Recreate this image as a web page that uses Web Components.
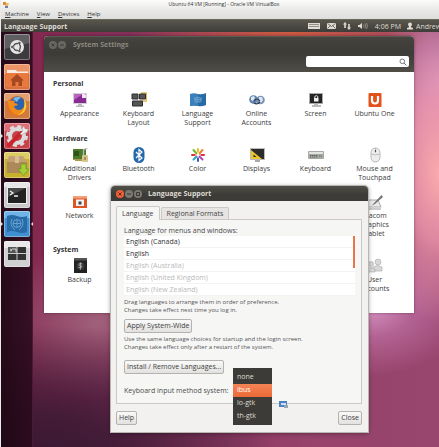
<!DOCTYPE html>
<html lang="en">
<head>
<meta charset="utf-8">
<title>Ubuntu 64 VM [Running] - Oracle VM VirtualBox</title>
<style>
html, body { height: 100%; margin: 0; }
body { font: 7px/9px "Open Sans", "Noto Sans", sans-serif; color: #4c4c4c; overflow: hidden; }
</style>
</head>
<body>
<vm-window heading="Ubuntu 64 VM [Running] - Oracle VM VirtualBox">
  <top-panel slot="panel" app="Language Support" time="4:06 PM" user="Andrew"></top-panel>
  <app-launcher slot="launcher"></app-launcher>
  <settings-window></settings-window>
  <language-dialog></language-dialog>
</vm-window>

<script>
const ICONS = {
  dash: '<rect width="26" height="26" fill="#3c3c3e"/><path d="M0 0h26v9Q13 12 0 15z" fill="#77777a" opacity=".6"/><circle cx="13" cy="13" r="7" fill="#e6e6e6"/><circle cx="13" cy="13" r="3.4" fill="none" stroke="#555" stroke-width="1.5"/><path d="M13 13L7 13M13 13l3.2-5.4M13 13l3.2 5.4" stroke="#e6e6e6" stroke-width="1"/><circle cx="8.3" cy="13" r="1.2" fill="#555"/><circle cx="15.4" cy="8.9" r="1.2" fill="#555"/><circle cx="15.4" cy="17.1" r="1.2" fill="#555"/>',
  home: '<rect width="26" height="26" fill="#d9703f"/><path d="M0 0h26v10H0z" fill="#f2a47a" opacity=".7"/><path d="M3 6h9l1 1.500h11v2H3z" fill="#f8ece4"/><path d="M2 9h22v14H2z" fill="#e8793f"/><path d="M13 10l7 6.500h-2V22h-3.500v-4h-3v4H8v-5.500H6z" fill="#a8481f"/>',
  firefox: '<rect width="26" height="26" fill="#cf7a3e"/><path d="M0 0h26v8H0z" fill="#eab088" opacity=".7"/><circle cx="13" cy="13" r="10" fill="#e8701a"/><circle cx="13.500" cy="11" r="7.500" fill="#2b62ae"/><path d="M9 6q4-4 8-1-3 1-4 4z" fill="#7ab8e8"/><path d="M4 6q1 2 3 2 2-1 4 0l-1 2q3 0 4 2-2 1-4 1 1 4 5 4 5 0 6-7 3 5-1 9-5 5-11 1-6-5-5-14z" fill="#f08a1e"/><path d="M20 6q3 4 2 9-2 7-9 7 6-2 7-7 1-4 0-9z" fill="#f9cf3c"/>',
  settings: '<rect width="26" height="26" fill="#c8404a"/><path d="M0 0h26v8H0z" fill="#e88088" opacity=".7"/><circle cx="13" cy="13" r="7" fill="none" stroke="#dcdcdc" stroke-width="4"/><circle cx="13" cy="13" r="9.500" fill="none" stroke="#dcdcdc" stroke-width="3" stroke-dasharray="4 3.460"/><path d="M5 22L17 10" stroke="#c9252d" stroke-width="4" stroke-linecap="round"/><path d="M16 11l3-3q-2-3 1-5l1 3 3 0q0 4-4 4l-2 2z" fill="#eee" stroke="#999" stroke-width=".5"/>',
  software: '<rect width="26" height="26" fill="#c7b02c"/><path d="M0 0h26v7H0z" fill="#e6d878" opacity=".7"/><path d="M5 4h14l4 6v11H3V10z" fill="#c3a173"/><path d="M3 10h20v11H3z" fill="#ad8858"/><path d="M11 4h4v7h-4z" fill="#d9bf90"/><path d="M17 12h5v5h3l-5.500 6.500L14 17h3z" fill="#a3d037" stroke="#6f9a1c" stroke-width=".7"/>',
  terminal: '<rect width="26" height="26" fill="#c9c9c9"/><path d="M0 0h26v5H0z" fill="#e6e6e6"/><rect x="3" y="5" width="20" height="17" fill="#eee"/><rect x="4" y="6" width="18" height="15" fill="#222"/><path d="M4 6h18L4 15z" fill="#484848"/><path d="M6 9l3 2-3 2M10 14h4" fill="none" stroke="#eee" stroke-width="1.300"/>',
  language: '<rect width="26" height="26" fill="#3f8fd0"/><path d="M0 0h26v7H0z" fill="#7cbcec" opacity=".8"/><path d="M3 5q5-2 10 0t10 0v16q-5 2-10 0t-10 0z" fill="#286ba6"/><g fill="none" stroke="#6aa6d6" stroke-width=".9"><circle cx="13" cy="12.500" r="4"/><path d="M9 12.500h8M13 8.500v8M8 8q-3 6 3 11M18 8q3 6-3 11"/></g>',
  workspaces: '<rect width="26" height="26" fill="#d0d0d0"/><path d="M0 0h26v7H0z" fill="#e8e8e8"/><rect x="4" y="6" width="18" height="13" fill="#333"/><path d="M4 6h9v6H4z" fill="#555"/><path d="M13 6v13M4 12.500h18" stroke="#ccc"/><path d="M6 8l2 1-2 1M8 8h4v3" fill="none" stroke="#eee" stroke-width=".8"/>',
  appearance: '<path d="M1 1h14v11H1z" fill="#d2d2d2"/><path d="M2 2h12v9H2z" fill="#8a2a94"/><path d="M2 2h9L2 8z" fill="#b964c0"/><path d="M10 2h3l1 1v3h-4z" fill="#f5e4f5"/><path d="M6 12h4v1.500h2V15H4v-1.500h2z" fill="#bbb"/>',
  layout: '<path d="M10 1h5.500v8H11v4H9" fill="none" stroke="#e8b64a" stroke-width="1.300"/><path d="M1 2h6v5H1zM8.500 2h6v5h-6zM1.500 9h10v5h-10z" fill="#555" stroke="#2e2e2e"/>',
  flag: '<path d="M0 2q4-1 8 0t8-1v12q-4 2-8 1t-8 0z" fill="#286aa6"/><path d="M0 2q4-1 8 0v12q-4-1-8 0z" fill="#3b80bb"/><g fill="none" stroke="#79afd8" stroke-width=".7"><circle cx="8" cy="7.500" r="2.500"/><path d="M8 5v5M5.500 7.500h5M5 5q-1.500 4 1.500 6M11 5q1.500 4-1.500 6"/></g>',
  online: '<circle cx="4.500" cy="7.500" r="4.300" fill="#5f83ad"/><circle cx="11.500" cy="8" r="4.300" fill="#7893b4"/><path d="M2 5l3-1 1 2-2 3-2-1zM10 5l3 0 1 3-2 3-2-3z" fill="#dfe8f1"/><path d="M5 9q3-4 6 0M5 11q3 2 6-1" fill="none" stroke="#333f50" stroke-width="1.200"/>',
  screen: '<path d="M1 1h14v11H1z" fill="#aaa"/><path d="M2 2h12v9H2z" fill="#252525"/><rect x="6" y="6" width="4.500" height="3.500" fill="#f1f1f1"/><path d="M6.800 6V4.500q1.500-1.800 3 0V6" fill="none" stroke="#eee"/><path d="M6 12h4v1h3v2H4v-2h2z" fill="#bbb"/>',
  one: '<rect x="1.500" y="1" width="13" height="14" rx="1" fill="#e4521b"/><path d="M5 4v4.500q0 3 3 3t3-3V4" fill="none" stroke="#fff" stroke-width="2.200"/>',
  drivers: '<path d="M1 2h13v10H1z" fill="#4b7a2b"/><path d="M2 4h5v5H2z" fill="#2d5318"/><path d="M1 12h9v2H3v-1H1z" fill="#a89a50"/><path d="M11.500 8V3q2-2 4-1" fill="none" stroke="#b9b9b9" stroke-width="1.300"/><rect x="10" y="8" width="6" height="7" rx="1" fill="#d6c48c"/><path d="M13 10v3" stroke="#775f2a"/>',
  bluetooth: '<rect x="2.500" y="0" width="11" height="16" rx="5.500" fill="#2568aa"/><path d="M5 5l6 6-3 2.500v-11L11 5l-6 6" fill="none" stroke="#fff" stroke-width="1.200"/>',
  color: '<g stroke-width="2" stroke-linecap="round"><path d="M8 6V2" stroke="#f0c020"/><path d="M9.500 6.500L12.500 3" stroke="#f08030"/><path d="M10 8h4" stroke="#e03040"/><path d="M9.500 9.500l3 3" stroke="#b04ab0"/><path d="M8 10v4" stroke="#4058c0"/><path d="M6.500 9.500l-3 3" stroke="#30a0c0"/><path d="M6 8H2" stroke="#d33"/><path d="M6.500 6.500L3.500 3" stroke="#6cba30"/></g><path d="M8 5v6M5 8h6" stroke="#fff" stroke-width="1"/>',
  displays: '<path d="M1 1h15v12H1z" fill="#bbb"/><path d="M2 2h13v10H2z" fill="#2b2b2b"/><path d="M2 3l11 9H2z" fill="#e9c72c"/><path d="M4.500 7.500L7.500 10h-3z" fill="#2b2b2b"/><path d="M6 13h5v2H6z" fill="#aaa"/>',
  keyboard: '<rect x="0" y="4" width="16" height="8" rx="1" fill="#a5aaa3"/><path d="M1 5h14v2H1z" fill="#e2e4e0"/><path d="M2 8.500h8M2 10h8M11 9h3" stroke="#5e635c" stroke-dasharray="1.400 .6"/>',
  mouse: '<rect x="4" y="1" width="9" height="14" rx="4.500" fill="#ececec" stroke="#aaa" stroke-width=".8"/><path d="M8.500 1v5M4.500 7q4 2 8 0" fill="none" stroke="#aaa" stroke-width=".7"/><path d="M8.500 3v2" stroke="#555" stroke-width="1.200"/>',
  network: '<path d="M1 2h14v12H1z" fill="#df5526"/><path d="M1 2h14v2.500H1z" fill="#f3a07f"/><path d="M4 5.500h8V12H4z" fill="#f4f4f4"/><path d="M6.500 7.500h3v3h-3z" fill="#444"/>',
  tablet: '<path d="M2 6h9l3 7H0z" fill="#eaeaea" stroke="#aaa"/><path d="M14.500 1L7 9l-2 2.500L8 10l8-7z" fill="#777"/><path d="M2 15h12" stroke="#999"/>',
  backup: '<rect x="2" y="0" width="13" height="15" fill="#222"/><path d="M2 0h13v2.500H2z" fill="#555"/><circle cx="8.500" cy="8" r="4" fill="#3a3a3a"/><path d="M10 6q-3-1.500-3 .5t2.500 1.500q1 2-3 1.500M8.500 4.500v7" fill="none" stroke="#bbb" stroke-width=".8"/>',
  users: '<g fill="#d8d8d8" stroke="#aaa" stroke-width=".6"><circle cx="11" cy="4" r="3"/><path d="M6 13V9q5-3 9 0v4z"/><circle cx="4" cy="6" r="2.500"/><path d="M0 14v-3q4-3 8 0v3z"/></g>'
};
const art = (name, box) => `<svg viewBox="0 0 ${box} ${box}" aria-hidden="true">${ICONS[name]}</svg>`;
const RESET = `:host,*{box-sizing:border-box}button{font:inherit;color:inherit;border:0;background:none;padding:0;margin:0}svg{display:block}p,h1,h2,ul{margin:0;padding:0;font:inherit}`;

class Base extends HTMLElement {
  connectedCallback() {
    if (this.shadowRoot) return;
    this.attachShadow({ mode: 'open' }).innerHTML = `<style>${RESET}${this.css()}</style>${this.html()}`;
  }
}

customElements.define('vm-window', class extends Base {
  css() { return `
    :host{display:flex;flex-direction:column;height:100vh;background:#ecebe9;padding-left:1px}
    header{background:linear-gradient(#fbfbfa,#e9e9e7 10px,#dededc);color:#333}
    .title{display:flex;align-items:center;height:9px;padding:0 1px}
    .title svg{width:8px;height:8px}
    h1{flex:1;text-align:center;font:5px/9px "Open Sans",sans-serif}
    nav{display:flex;gap:8px;height:10px;padding-left:4px;font-size:6px;line-height:10px}
    nav u{text-underline-offset:1px}
    .screen{position:relative;flex:1;min-height:0;display:flex;background:
      radial-gradient(ellipse 240px 140px at 8% 104%,#371832 0,#3a1a34e0 35%,#4a223c00 100%),
      radial-gradient(ellipse 70px 150px at 100% 34%,#fbaaae 0,#f59db2c0 45%,#e58cb400 100%),
      radial-gradient(ellipse 60px 100px at 100% 12%,#c88ab8 0,#c98ab900 100%),
      radial-gradient(ellipse 100px 70px at 84% 66%,#d794c4 0,#c577ac99 45%,#b8609c00 100%),
      radial-gradient(ellipse 160px 30px at 66% 0,#cf5a40 0,#c0503c00 100%),
      radial-gradient(ellipse 110px 80px at 22% 70%,#a0607a 0,#8a486400 100%),
      linear-gradient(90deg,#84284f 8%,#84305a 30%,#96426a 70%,#98466e)}
    .work{position:relative;flex:1;min-width:0}`; }
  html() {
    const [m, v, d, h] = ['Machine', 'View', 'Devices', 'Help'].map(t => `<button><u>${t[0]}</u>${t.slice(1)}</button>`);
    return `<header><div class="title"><svg viewBox="0 0 8 8" aria-hidden="true"><path d="M1 1h3v3H1z" fill="#d98a30"/><path d="M4 2h3l-1 3H3z" fill="#f0b860"/><path d="M3 5h3v2H3z" fill="#6e7fae"/></svg><h1>${this.getAttribute('heading')}</h1></div>
      <nav>${m}${v}${d}${h}</nav></header>
      <slot name="panel"></slot><div class="screen"><slot name="launcher"></slot><div class="work"><slot></slot></div></div>`; }
});

customElements.define('top-panel', class extends Base {
  css() { return `
    :host{display:flex;align-items:center;height:13px;padding-left:3px;background:linear-gradient(#58564d,#3e3d38);color:#dfdbd2;white-space:nowrap;border-top:1px solid #6a685e}
    b{flex:1}
    button{display:flex;align-items:center;margin-left:7px}
    svg{fill:#dfdbd2;height:8px}
    .user{gap:3px;margin-left:6px}.user span{width:23px;overflow:hidden;text-align:left}`; }
  html() { return `<b>${this.getAttribute('app')}</b>
    <button aria-label="Keyboard"><svg width="12" viewBox="0 0 12 8"><path d="M0 1h12v6H0z"/><path d="M1.500 2.500h9M1.500 4.500h9" stroke="#45443e" stroke-dasharray="1 1"/></svg></button>
    <button aria-label="Mail"><svg width="9" viewBox="0 0 9 8"><path d="M0 1h9v6H0z"/><path d="M.5 1.500l4 3 4-3M.5 6.500l3-3M8.500 6.500l-3-3" fill="none" stroke="#45443e" stroke-width=".7"/></svg></button>
    <button aria-label="Network"><svg width="8" viewBox="0 0 8 8"><path d="M2 0l2 2.500H2.800V6H1.200V2.500H0zM6 8L4 5.500h1.200V2h1.600v3.500H8z"/></svg></button>
    <button aria-label="Sound"><svg width="10" viewBox="0 0 10 8"><path d="M0 3h1.500L4 1v6L1.500 5H0z"/><path d="M5.500 2.500q1 1.500 0 3M7 1.500q1.800 2.500 0 5M8.500 1q2 3 0 6" fill="none" stroke="#9a978f" stroke-width=".8"/></svg></button>
    <button>${this.getAttribute('time')}</button>
    <button class="user"><svg width="6" viewBox="0 0 6 8"><circle cx="3" cy="2.500" r="2"/><path d="M2 4h2v1.200l2 .8v1.500H0V6l2-.8z"/></svg><span>${this.getAttribute('user')}</span></button>`; }
});

customElements.define('app-launcher', class extends Base {
  css() { return `
    :host{display:block;width:32px;background:linear-gradient(90deg,#1d0713e8,#2a0a1ce0);border-right:1px solid #4a1c34}
    nav{display:flex;flex-direction:column;justify-content:space-between;align-items:center;height:235px;padding-top:2px}
    button{position:relative;width:26px;height:26px}
    svg{width:26px;height:26px;border-radius:2px}
    button::after{content:"";position:absolute;inset:0;border:1px solid #ffffff55;border-radius:2px}
    i{position:absolute;top:11px;border:2px solid transparent}
    .l{left:-3px;border-left-color:#ddd}.r{right:-3px;border-right-color:#ddd}`; }
  html() {
    const items = [['dash','Dash home'],['home','Home Folder'],['firefox','Firefox'],['settings','System Settings','<i class="l"></i>'],['software','Software Centre'],['terminal','Terminal'],['language','Language Support','<i class="l"></i><i class="r"></i>'],['workspaces','Workspaces']];
    return `<nav>${items.map(([k, t, x = '']) => `<button aria-label="${t}">${art(k, 26)}${x}</button>`).join('')}</nav>`; }
});

customElements.define('window-button', class extends Base {
  css() { return `
    :host{display:block}
    button{display:block;width:8px;height:8px;border-radius:4px;background:#7b7972}
    svg{width:8px;height:8px}
    path{fill:none;stroke:#3a3934}
    :host([hot]) button{background:#ee6038}
    :host([hot]) path{stroke:#6b2412}`; }
  html() {
    const k = this.getAttribute('kind');
    const d = { Close: 'M2.500 2.500l3 3M5.500 2.500l-3 3', Minimize: 'M2 4h4', Maximize: 'M2.500 2.500h3v3h-3z' }[k];
    return `<button aria-label="${k}"><svg viewBox="0 0 8 8"><path d="${d}"/></svg></button>`; }
});

customElements.define('setting-tile', class extends Base {
  css() { return `
    :host{display:block;text-align:center;color:#3c3c3c}
    button{display:block;width:100%;line-height:9px}
    svg{width:16px;height:16px;margin:0 auto 1px}`; }
  html() { return `<button>${art(this.getAttribute('icon'), 16)}<slot></slot></button>`; }
});

customElements.define('setting-group', class extends Base {
  css() { return `
    :host{display:block}
    h2{font-weight:bold;line-height:10px;padding-left:3px;margin-bottom:3px;color:#333}
    div{display:grid;grid-template-columns:repeat(6,1fr);row-gap:12px}`; }
  html() { return `<h2>${this.getAttribute('heading')}</h2><div><slot></slot></div>`; }
});

customElements.define('settings-window', class extends Base {
  css() { return `
    :host{position:absolute;left:11px;right:25px;top:4px;display:flex;flex-direction:column;border-radius:4px 4px 0 0;overflow:hidden;background:#fff;box-shadow:0 0 3px #0006;min-height:277px}
    header{background:linear-gradient(#45443f,#3c3b37 45%,#4f4d46);border-top:1px solid #5b5a54}
    .bar{display:flex;align-items:center;gap:1px;height:15px;padding-left:5px;color:#8b887f;font-weight:bold}
    .bar span{padding-left:6px}
    window-button{opacity:.7}
    form{display:flex;justify-content:flex-end;margin:0;padding:4px 5px 5px}
    label{display:flex;align-items:center;width:103px;height:11px;background:#fff;border-radius:2px;padding-right:2px}
    input{flex:1;min-width:0;border:0;background:none;font:inherit;padding:0 2px;outline:0;height:9px}
    label svg{width:8px;height:8px;fill:none;stroke:#777}
    main{display:flex;flex-direction:column;gap:7px;padding:7px 10px 0 6px}
    .last{grid-column:6}.first{grid-column:1}`; }
  html() {
    const t = (i, s, c = '') => `<setting-tile icon="${i}" class="${c}">${s}</setting-tile>`;
    return `<header><div class="bar"><window-button kind="Close"></window-button><window-button kind="Minimize"></window-button><span>System Settings</span></div>
    <form><label><input type="search" aria-label="Search settings"><svg viewBox="0 0 8 8"><circle cx="3.300" cy="3.300" r="2.300"/><path d="M5 5l2.500 2.500"/></svg></label></form></header>
    <main>
    <setting-group heading="Personal">${t('appearance','Appearance')}${t('layout','Keyboard<br>Layout')}${t('flag','Language<br>Support')}${t('online','Online<br>Accounts')}${t('screen','Screen')}${t('one','Ubuntu One')}</setting-group>
    <setting-group heading="Hardware">${t('drivers','Additional<br>Drivers')}${t('bluetooth','Bluetooth')}${t('color','Color')}${t('displays','Displays')}${t('keyboard','Keyboard')}${t('mouse','Mouse and<br>Touchpad')}${t('network','Network','first')}${t('tablet','Wacom<br>Graphics<br>Tablet','last')}</setting-group>
    <setting-group heading="System">${t('backup','Backup')}${t('users','User<br>Accounts','last')}</setting-group>
    </main>`; }
});

customElements.define('push-button', class extends Base {
  css() { return `
    :host{display:inline-block}
    button{height:14px;padding:0 2px;line-height:12px;color:#3f3f3f;border:1px solid #b5b3af;border-radius:2px;background:linear-gradient(#fafafa,#e2e1df);white-space:nowrap}`; }
  html() { return `<button><slot></slot></button>`; }
});

customElements.define('language-dialog', class extends Base {
  css() { return `
    :host{position:absolute;left:78px;right:71px;top:154px;border-radius:4px 4px 0 0;background:#f2f1f0;box-shadow:0 0 0 1px #b9b5b0,0 1px 5px #0007}
    header{display:flex;align-items:center;gap:1px;height:15px;padding-left:5px;border-radius:4px 4px 0 0;background:linear-gradient(#504f49,#3c3b37 60%);color:#dfdbd2;font-weight:bold}
    header span{padding-left:5px}
    .body{padding:5px 6px 7px 5px}
    .tabs{display:flex;align-items:flex-end;gap:1px}
    .tabs button{height:12px;padding:0 5px;line-height:11px;border:1px solid #cbc9c5;border-bottom:0;border-radius:2px 2px 0 0;background:#e6e5e3;color:#444}
    .tabs button[aria-selected=true]{height:14px;margin-bottom:-1px;background:#f6f6f5;position:relative}
    section{border:1px solid #cbc9c5;background:#f6f6f5;padding:6px 6px 6px 7px}
    section>p{line-height:10px;color:#4a4a4a}
    ul{list-style:none;position:relative}
    li{line-height:11px;height:12px;padding-left:2px;background:#fff;border-bottom:1px solid #f3f3f3;color:#333}
    li.off{color:#b9b9b9}
    ul::after{content:"";position:absolute;right:0;top:0;width:2px;height:32px;background:#e9764b}
    p.note{font-size:6px;line-height:8px;color:#555;padding:2px 0 5px}
    .install{margin:4px 0 9px}
    .row{display:flex}
    .method{position:relative;display:flex;align-items:center;height:14px}
    .method select{position:absolute;left:109px;top:-15px;width:39px;height:57px;overflow:hidden;border:0;padding:3px 0 0;margin:0;outline:0;border-radius:0;background:#3c3b37;color:#dfdbd2;font:inherit}
    option{height:13px;min-height:0;padding:1px 4px 0;line-height:12px;color:#dfdbd2;box-sizing:border-box}
    option:checked{color:#fff;background:linear-gradient(#f58455,#ea6a38)}
    .method svg{position:absolute;left:155px;top:18px;width:9px;height:7px}
    footer{display:flex;justify-content:space-between;padding-top:7px}`; }
  html() {
    const langs = [['English (Canada)'],['English'],['English (Australia)','off'],['English (United Kingdom)','off'],['English (New Zealand)','off']];
    return `<header><window-button kind="Close" hot></window-button><window-button kind="Minimize"></window-button><window-button kind="Maximize"></window-button><span>Language Support</span></header>
    <div class="body"><div class="tabs" role="tablist"><button role="tab" aria-selected="true">Language</button><button role="tab" aria-selected="false">Regional Formats</button></div>
    <section>
      <p>Language for menus and windows:</p>
      <ul>${langs.map(([t, c = '']) => `<li class="${c}">${t}</li>`).join('')}</ul>
      <p class="note">Drag languages to arrange them in order of preference.<br>Changes take effect next time you log in.</p>
      <div class="row"><push-button>Apply System-Wide</push-button></div>
      <p class="note">Use the same language choices for startup and the login screen.<br>Changes take effect only after a restart of the system.</p>
      <div class="row install"><push-button>Install / Remove Languages...</push-button></div>
      <div class="method"><label for="im">Keyboard input method system:</label>
        <select id="im" size="4"><option>none</option><option selected>ibus</option><option>lo-gtk</option><option>th-gtk</option></select>
        <svg viewBox="0 0 9 7" aria-hidden="true"><path d="M0 0h8v6H0z" fill="#4a82c4"/><path d="M2 2h5v2H2z" fill="#cfe0f2"/><path d="M5 4h4v3H5z" fill="#9aa6b4"/></svg></div>
    </section>
    <footer><push-button>Help</push-button><push-button>Close</push-button></footer></div>`; }
});
</script>
</body>
</html>
